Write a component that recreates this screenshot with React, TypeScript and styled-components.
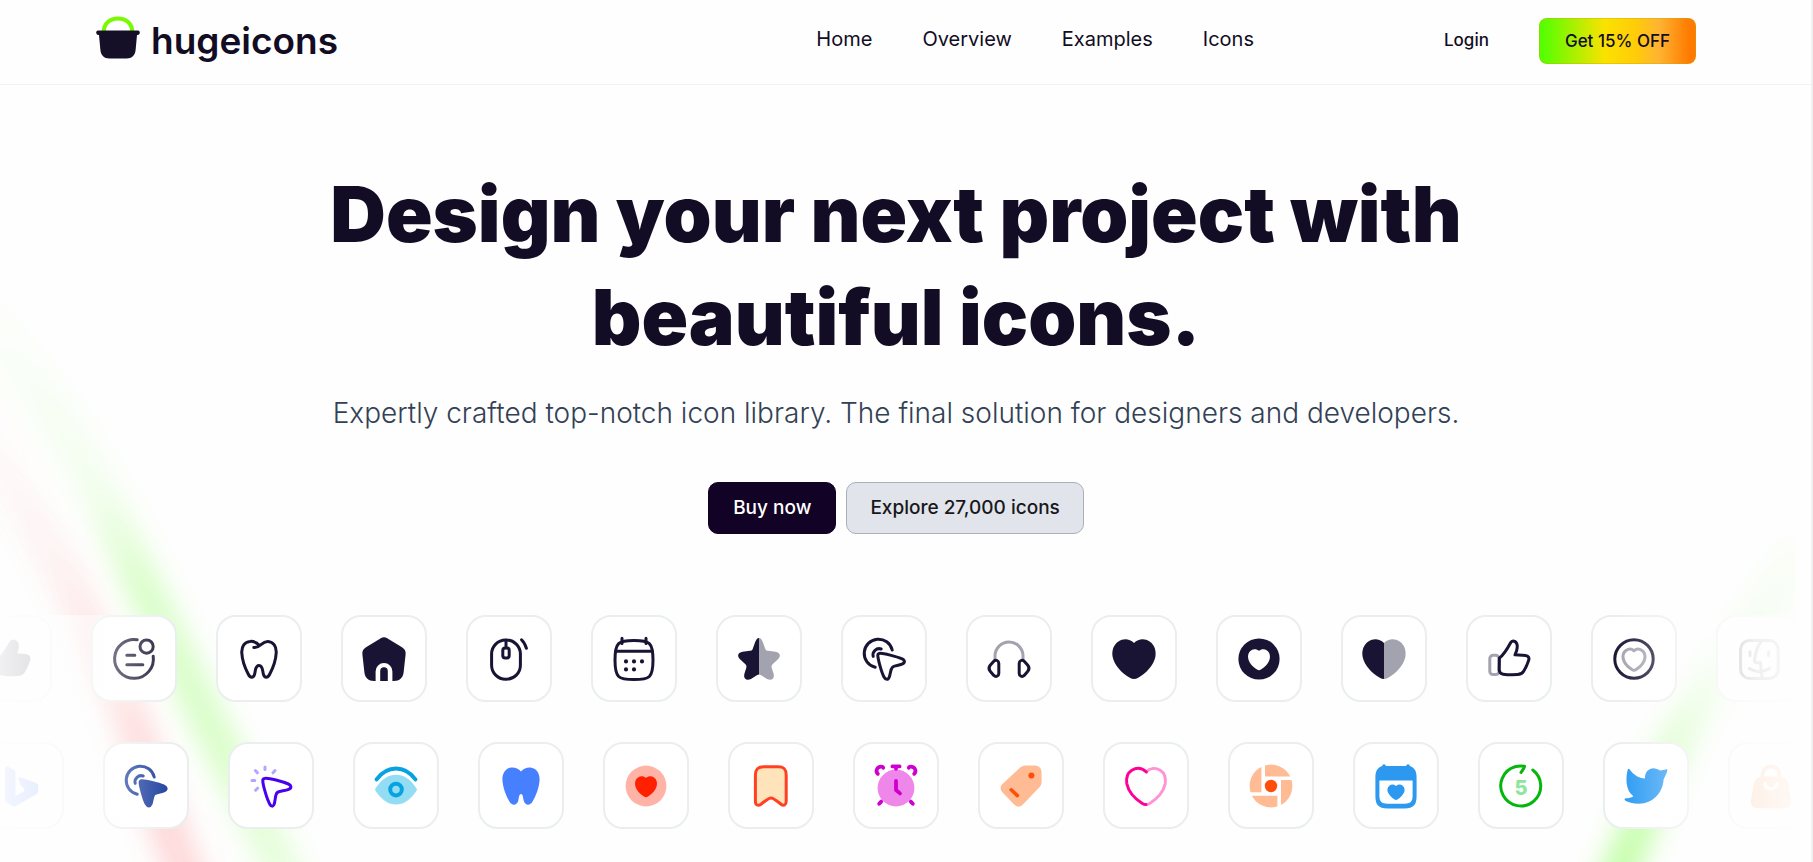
import React from "react";
import styled, { createGlobalStyle } from "styled-components";

const INK = "#191433";
const MUTED = "#a3a2af";

const GlobalStyle = createGlobalStyle`
  *, *::before, *::after { box-sizing: border-box; }
  body {
    margin: 0;
    background: #fefefe;
    font-family: Inter, "Liberation Sans", sans-serif;
    color: #120c24;
  }
  a { color: inherit; text-decoration: none; }
`;

const Page = styled.div`
  position: relative;
  isolation: isolate;
  min-height: 100vh;
  overflow: hidden;
  border-right: 2px solid #f0f0f0;
`;

const Backdrop = styled.svg<{ $side: "left" | "right" }>`
  position: absolute;
  top: 260px;
  ${(p) => (p.$side === "left" ? "left: 0;" : "right: 16px;")}
  z-index: -1;
  width: 400px;
  height: 602px;
`;

const Header = styled.header`
  display: flex;
  align-items: center;
  padding: 18px 115px 20px 96px;
  border-bottom: 1px solid #f3f3f3;
`;

const Brand = styled.a`
  display: flex;
  align-items: center;
  gap: 11px;
  height: 46px;
  font-size: 37px;
  line-height: 46px;
  font-weight: 600;
`;

const BrandMark = styled.svg`
  width: 44px;
  height: 44px;
  margin-bottom: 8px;
`;

const Nav = styled.nav`
  display: flex;
  gap: 50px;
  margin-left: auto;
  padding-bottom: 4px;
  font-size: 20px;
  line-height: 24px;
`;

const Actions = styled.div`
  display: flex;
  align-items: center;
  gap: 50px;
  margin-left: 190px;
  font-size: 17px;
  font-weight: 500;
`;

const LoginLink = styled.a`
  padding-bottom: 2px;
`;

const OfferButton = styled.button`
  height: 46px;
  padding: 0 25px;
  border: 1px solid rgba(200, 170, 0, 0.4);
  border-radius: 8px;
  background: linear-gradient(90deg, #55ff00 2%, #fbe200 42%, #ffcb0a 62%, #ffb432 76%, #ff7a00 96%) border-box;
  color: #120c24;
  font: inherit;
`;

const Content = styled.main`
  padding-right: 19px;
`;

const Hero = styled.section`
  display: flex;
  flex-direction: column;
  align-items: center;
  padding-top: 78px;
  text-align: center;
`;

const Title = styled.h1`
  max-width: 1200px;
  margin: 0;
  font-size: 77px;
  line-height: 103px;
  font-weight: 900;
`;

const Lead = styled.p`
  margin: 24px 0 0;
  color: #334155;
  font-size: 28px;
  line-height: 40px;
  font-weight: 350;
`;

const ButtonRow = styled.div`
  display: flex;
  gap: 10px;
  margin-top: 49px;
`;

const CallButton = styled.button<{ $primary?: boolean }>`
  height: 52px;
  padding: 0 ${(p) => (p.$primary ? 24 : 23)}px;
  border: 1px solid ${(p) => (p.$primary ? "#120226" : "#a9b0bc")};
  border-radius: 10px;
  background: ${(p) => (p.$primary ? "#120226" : "#e1e4eb")};
  color: ${(p) => (p.$primary ? "#ffffff" : "#18181b")};
  font: inherit;
  font-size: 19px;
  line-height: 24px;
  font-weight: 500;
`;

const Showcase = styled.section`
  position: relative;
  display: flex;
  flex-direction: column;
  gap: 40px;
  margin-top: 81px;
  padding-bottom: 32px;
  overflow: hidden;
`;

const Strip = styled.div<{ $shift: number }>`
  display: flex;
  gap: 39px;
  margin-left: ${(p) => -p.$shift}px;
`;

const Tile = styled.div`
  display: grid;
  place-items: center;
  flex: none;
  width: 86px;
  height: 87px;
  border: 2px solid #ebeeef;
  border-radius: 20px;
  background: #ffffff;
`;

const Glyph = styled.svg`
  display: block;
  width: 48px;
  height: 48px;
  fill: none;
  stroke-width: 1.5;
  stroke-linecap: round;
  stroke-linejoin: round;
`;

const Fade = styled.div<{ $side: "left" | "right" }>`
  position: absolute;
  top: 0;
  bottom: 32px;
  ${(p) => p.$side}: 0;
  width: 10%;
  pointer-events: none;
  background: linear-gradient(
    to ${(p) => p.$side},
    rgba(254, 254, 254, 0),
    rgba(254, 254, 254, 0.88) 80%,
    rgba(254, 254, 254, 0.94)
  );
`;

const HEART =
  "M12 4C9.7 1.7 6.6 1.7 4.2 3.2C1.7 4.8 .8 7.8 1.3 10.9C2.2 15.4 6.2 19.3 9.9 21.4C11.4 22.2 12.6 22.2 14.1 21.4C17.8 19.3 21.8 15.4 22.7 10.9C23.2 7.8 22.3 4.8 19.8 3.2C17.4 1.7 14.3 1.7 12 4Z";
const HEART_LEFT =
  "M12 4C9.7 1.7 6.6 1.7 4.2 3.2C1.7 4.8 .8 7.8 1.3 10.9C2.2 15.4 6.2 19.3 9.9 21.4C10.6 21.8 11.3 22 12 22Z";
const HEART_RIGHT =
  "M12 4C14.3 1.7 17.4 1.7 19.8 3.2C22.3 4.8 23.2 7.8 22.7 10.9C21.8 15.4 17.8 19.3 14.1 21.4C13.4 21.8 12.7 22 12 22Z";
const SMALL_HEART =
  "M12 7.9C10.8 6.8 9.2 6.9 8 7.7C6.7 8.6 6.3 10.2 6.6 11.8C7.1 14.2 9.1 16.1 11 17.3C11.7 17.8 12.3 17.8 13 17.3C14.9 16.1 16.9 14.2 17.4 11.8C17.7 10.2 17.3 8.6 16 7.7C14.8 6.9 13.2 6.8 12 7.9Z";
const STAR_LEFT =
  "M12 1.5C11.1 1.5 10.5 2.5 10 3.8L8.8 7.1C8.5 7.7 8 7.8 7.4 7.9L3.8 8.4C1.5 8.8 .9 10.4 2.4 12L5.2 14.6C5.7 15.2 5.8 15.6 5.7 16.2L4.7 19.4C4.1 21.9 5.8 23.1 8 22L11.1 20C11.4 19.8 11.7 19.7 12 19.7Z";
const CURSOR =
  "M9.6 9.2C11.4 8.9 18.7 10.9 20.8 11.8C22.6 12.6 22.7 13.8 21 14.6C19.3 15.4 17.1 15.2 16.2 16.1C15.2 17.1 15.3 19.4 14.6 21.1C14.1 22.5 12.8 22.5 12 21C10.8 18.8 8.9 12 8.9 10C8.9 9.6 9.1 9.3 9.6 9.2Z";
const THUMB =
  "M7.2 11.5C9.5 9.9 11.3 6.7 12.8 3.9C13.6 2.4 15.6 3 16 4.7C16.4 6.4 15.7 8.5 15 9.9C16.8 10 18.6 10 20.2 10.2C21.7 10.4 22.3 11.4 21.8 12.8C21.2 14.6 20.4 16.4 19.4 18C18.7 19.2 17.6 19.8 16.2 19.8C13.8 19.9 11.3 19.9 9.1 19.6C7.8 19.4 7.2 18.6 7.1 17.4Z";

const BLUE_INK = "#16399b";

const darkIcons: Array<[string, React.ReactNode]> = [
  ["Thumbs up, solid", <path d={THUMB} fill={INK} stroke={INK} />],
  [
    "Note",
    <g stroke={INK}>
      <path d="M13.6 2.4A9.7 9.7 0 1 0 21.6 10.6" />
      <circle cx="18.3" cy="5.8" r="3.3" />
      <path d="M8.4 10.1h4M8.4 14.9h8" />
    </g>,
  ],
  [
    "Tooth",
    <path
      stroke={INK}
      d="M12.3 5.3C11 3.9 9.4 3 7.5 3.2C4.8 3.4 3.2 5.8 3.4 8.9C3.6 12.8 5.2 16.8 6.6 19.5C7.6 21.6 9.2 21.6 9.8 19.6C10.3 18 10 15.2 12 15.2C14 15.2 13.7 18 14.2 19.6C14.8 21.6 16.4 21.6 17.4 19.5C18.8 16.8 20.4 12.8 20.6 8.9C20.8 5.8 19.2 3.4 16.5 3.2C13.2 3 12.6 6.7 9.4 6.2"
    />,
  ],
  [
    "Home",
    <g fill={INK}>
      <path d="M10.4 1.6C11.4 1 12.6 1 13.6 1.6L21 6.1C22.4 7 23 8.1 22.8 9.7L21.8 18.8C21.4 21.6 19.8 23 17 23H16.2V18.2A4.2 4.2 0 0 0 7.8 18.2V23H7C4.2 23 2.6 21.6 2.2 18.8L1.2 9.7C1 8.1 1.6 7 3 6.1Z" />
      <path d="M10.1 23V18A1.9 1.9 0 0 1 13.9 18V23Z" />
    </g>,
  ],
  [
    "Mouse",
    <g stroke={INK}>
      <rect x="3.3" y="2.5" width="14.4" height="19.6" rx="7" />
      <rect x="8.9" y="6.5" width="3.2" height="5" rx="1.2" />
      <path d="M10.5 2.6v3.8M18.3 2.4Q19.8 3.7 20.7 6.6" />
    </g>,
  ],
  [
    "Calendar",
    <g stroke={INK}>
      <path d="M12 2.8C19.8 2.8 21.5 3.6 21.5 12.5S19.8 22.3 12 22.3S2.5 21.4 2.5 12.5S4.2 2.8 12 2.8Z" />
      <path d="M2.8 8.1h18.4M6 1.6v2.6M18 1.6v2.6" />
      <path strokeWidth="2.1" d="M8 13.2h0M12 13.2h0M16 13.2h0M8 17.2h0M12 17.2h0" />
    </g>,
  ],
  [
    "Star",
    <>
      <path d={STAR_LEFT} fill={INK} />
      <path d={STAR_LEFT} fill={MUTED} transform="matrix(-1 0 0 1 24 0)" />
    </>,
  ],
  [
    "Click pointer",
    <g stroke={INK}>
      <path d="M16.1 7.5A7.1 7.1 0 1 0 7.6 16.1" />
      <path d="M10.6 7A3.1 3.1 0 0 0 6.6 10.7" />
      <path d={CURSOR} />
    </g>,
  ],
  [
    "Headphones",
    <>
      <path stroke={MUTED} d="M5 12.2V10.5A7 7 0 0 1 19 10.5V12.2" />
      <g stroke={INK}>
        <path d="M6.9 14.2V19.2C6.9 20.6 5.4 21.2 4.4 20.2L2.6 18.1C1.8 17.2 1.8 16.1 2.6 15.1L4.4 13.1C5.4 12.1 6.9 12.8 6.9 14.2Z" />
        <path d="M17.1 14.2V19.2C17.1 20.6 18.6 21.2 19.6 20.2L21.4 18.1C22.2 17.2 22.2 16.1 21.4 15.1L19.6 13.1C18.6 12.1 17.1 12.8 17.1 14.2Z" />
      </g>
    </>,
  ],
  ["Heart", <path d={HEART} fill={INK} />],
  [
    "Heart badge",
    <>
      <circle cx="12" cy="12" r="10.3" fill={INK} />
      <path d={SMALL_HEART} fill="#fff" />
    </>,
  ],
  [
    "Duotone heart",
    <>
      <path d={HEART_LEFT} fill={INK} />
      <path d={HEART_RIGHT} fill={MUTED} />
    </>,
  ],
  [
    "Thumbs up",
    <>
      <rect x="2.4" y="10.1" width="4.6" height="9.7" rx="1.7" stroke={MUTED} />
      <path d={THUMB} stroke={INK} />
    </>,
  ],
  [
    "Heart circle",
    <>
      <circle cx="12" cy="12" r="9.6" stroke={INK} />
      <path d={SMALL_HEART} stroke={MUTED} />
    </>,
  ],
  [
    "Finder",
    <g stroke="#8b8a99">
      <rect x="2.8" y="2.7" width="18.8" height="19" rx="4.5" />
      <path d="M13.2 3.2C11 5.8 10.1 9.6 9.8 12.6C9.7 13.5 10 13.9 10.8 13.9H12.8C12.8 16.8 13 19 13.7 21.5" />
      <path d="M7.5 8.4v1.9M16.8 8.4v1.9M7.2 16.8Q12 19.9 17.2 16.8" />
    </g>,
  ],
];

const colourIcons: Array<[string, React.ReactNode]> = [
  [
    "Bing",
    <path fill="#5b86ff" d="M4 3C4 2.2 4.8 2 5.5 2.4L8.3 3.9C9 4.3 9.2 4.7 9.2 5.5V17L13.6 14.6L13.7 13.2L12 12L10.8 8.8C10.6 7.9 11.2 7.5 12 7.8L19 10.2C20.1 10.6 20.6 11.2 20.6 12.3V14.2C20.6 15.1 20.2 15.7 19.4 16.2L9.4 22C8.6 22.4 7.9 22.3 7.2 21.8L4.7 20C4.2 19.6 4 19.2 4 18.6Z" />,
  ],
  [
    "Solid click pointer",
    <g stroke={BLUE_INK}>
      <path d="M16.1 7.5A7.1 7.1 0 1 0 7.6 16.1" />
      <path d="M10.6 7A3.1 3.1 0 0 0 6.6 10.7" />
      <path d={CURSOR} fill={BLUE_INK} strokeWidth="1.2" />
    </g>,
  ],
  [
    "Cursor with rays",
    <>
      <path
        stroke="#4a00ee"
        d="M8.8 8.2C10.5 7.7 18.3 10 20.7 11C22.3 11.7 22.4 13 20.8 13.7C18.9 14.6 16.2 14.2 15.1 15.3C13.9 16.5 14.3 19.3 13.5 21.3C12.9 22.4 12.1 22.3 11.4 21.1C9.8 18.3 7.9 11.2 7.9 9.2C7.9 8.6 8.2 8.3 8.8 8.2Z"
      />
      <path stroke="#b3a6ff" d="M9 2.5v1.3M4.2 4.3l1 1.1M14 4.3l-1 1.1M2.5 9.3h1.4M4.3 14.1l1-1" />
    </>,
  ],
  [
    "Eye",
    <>
      <path fill="#92dcf4" d="M1.8 13.1C5 8.4 8.2 6.4 12 6.4S19 8.4 22.2 13.1C22.5 13.6 22.5 14 22.2 14.5C19 19.2 15.8 21.2 12 21.2S5 19.2 1.8 14.5C1.5 14 1.5 13.6 1.8 13.1Z" />
      <path stroke="#06a3e0" strokeWidth="2" d="M2.3 8.7Q6.4 3.3 12 3.3T21.7 8.7" />
      <circle cx="12" cy="13.8" r="2.9" stroke="#06a3e0" strokeWidth="2" />
    </>,
  ],
  [
    "Solid tooth",
    <path
      fill="#4680ff"
      d="M12 4.7C10.8 3.3 9.1 2.6 7.3 2.7C4.3 3 2.6 5.6 2.7 8.9C2.9 13 4.6 17 6.2 19.8C7.6 22.2 10.1 21.7 10.7 19.1C11 17.9 11 16 12 16S13 17.9 13.3 19.1C13.9 21.7 16.4 22.2 17.8 19.8C19.4 17 21.1 13 21.3 8.9C21.4 5.6 19.7 3 16.7 2.7C14.9 2.6 13.2 3.3 12 4.7Z"
    />,
  ],
  [
    "Red heart badge",
    <>
      <circle cx="12" cy="12" r="10.2" fill="#ffb3a7" />
      <path d={SMALL_HEART} fill="#ff2000" />
    </>,
  ],
  [
    "Bookmark",
    <path
      fill="#ffe3bb"
      stroke="#ff4023"
      d="M4.2 6.6C4.2 3.6 5.4 2.4 8.4 2.4H15.6C18.6 2.4 19.6 3.6 19.6 6.6V19.6C19.6 21.6 18.4 22.2 17 21.1C15.6 20 13.2 18 12 18S8.4 20 7 21.1C5.5 22.2 4.2 21.6 4.2 19.6Z"
    />,
  ],
  [
    "Alarm clock",
    <>
      <circle cx="12" cy="13" r="9.2" fill="#ef86ea" />
      <g stroke="#cf00cf" strokeWidth="1.9">
        <path d="M10.2 2.2h3.6M12 2.4v1" />
        <path d="M12 9.4V14L14 15.7M3.6 20.9l1-1.1M20.4 20.9l-1-1.1" />
        <path d="M2.9 5.9C1.6 4.6 2.5 2.5 4.3 2.3C5 2.2 5.5 2.5 5.6 2.9M21.1 5.9C22.4 4.6 21.5 2.5 19.7 2.3C19 2.2 18.5 2.5 18.4 2.9" />
      </g>
    </>,
  ],
  [
    "Tag",
    <>
      <path fill="#ffbb94" d="M11.3 3C12.2 2.2 13 1.9 14.4 1.8H18.2C21.2 1.8 22.3 3 22.3 5.8V9.6C22.3 11 21.9 11.9 21.1 12.8L13.2 21C11.6 22.7 9.9 22.7 8.3 21L2.9 15.4C1.4 13.8 1.4 12.4 3 10.8Z" />
      <circle cx="17.2" cy="6.7" r="1.5" fill="#ff4d0a" />
      <path stroke="#ff4d0a" strokeWidth="1.8" d="M7.1 13.9l3.1 2.9" />
    </>,
  ],
  [
    "Outline heart",
    <>
      <path stroke="#ff94d5" d="M12 4.9C14.1 2.9 16.9 2.8 19.1 4.1C21.3 5.5 22 8.2 21.6 10.9C20.7 15 17.5 18.4 14 20.6C13.2 21.1 12.6 21.3 12 21.3" />
      <path stroke="#ff0096" d="M12.2 5C9.9 2.9 7.1 2.8 4.9 4.1C2.7 5.5 2 8.2 2.4 10.9C3.3 15 6.5 18.4 10 20.6C10.8 21.1 11.4 21.3 12 21.3" />
    </>,
  ],
  [
    "Browser",
    <>
      <circle cx="12" cy="12" r="10.7" fill="#ffbb94" />
      <path fill="#fff" d="M7.2 0H9V7.2H24V9H17V24H15.2V16.9H0V15.1H7.2Z" />
      <circle cx="12" cy="12" r="3.1" fill="#ff4d0a" />
    </>,
  ],
  [
    "Calendar heart",
    <>
      <path
        fill="#2d98f0"
        d="M5.1 2A.9.9 0 0 1 6.9 2H17.1A.9.9 0 0 1 18.9 2C21.5 3 22.3 4.6 22.3 8V17C22.3 21.5 20.7 23.2 16.3 23.2H7.7C3.3 23.2 1.7 21.5 1.7 17V8C1.7 4.6 2.5 3 5.1 2Z"
      />
      <path fill="#fff" d="M3.7 9.2H20.3V16.8C20.3 19.9 19.2 20.9 16.2 20.9H7.8C4.8 20.9 3.7 19.9 3.7 16.8Z" />
      <path
        fill="#2d98f0"
        d="M12 12C10.9 11.1 9.7 11.1 8.8 11.7C7.8 12.4 7.5 13.6 7.8 14.8C8.3 16.4 9.8 17.9 11.3 18.8C11.8 19.1 12.2 19.1 12.7 18.8C14.2 17.9 15.7 16.4 16.2 14.8C16.5 13.6 16.2 12.4 15.2 11.7C14.3 11.1 13.1 11.1 12 12Z"
      />
    </>,
  ],
  [
    "Forward five seconds",
    <>
      <path stroke="#05b60c" d="M17.9 4A10 10 0 1 1 9 2.4C10.6 1.9 12 1.9 13.8 2.1C13.5 3.3 12.8 4.3 12 5.2" />
      <text x="12" y="16.6" textAnchor="middle" fontSize="10" fontWeight="800" fill="#8de79b">
        5
      </text>
    </>,
  ],
  [
    "Bird",
    <path
      fill="#2196f3"
      d="M22.7 4C22.4 5.9 21.4 7.2 20.8 8.8C20.4 15.4 15.5 20.9 8.5 20.9C5.5 20.9 3 20.3 1.6 19.3C1 18.7 1.3 18.1 2 18.1C3.3 18.1 4.6 17.8 5.7 17.1C1.8 14.5 1.7 8 2.9 3.8C3.1 3.2 3.5 3.2 3.9 3.7C5.8 6.4 8.4 8 11.5 8.2C11.4 5.2 13.4 3 16.2 3.2C17.3 3.3 18.3 3.6 19 4.2C20 4.2 21.3 3.9 22.2 3.6C22.6 3.5 22.8 3.6 22.7 4Z"
    />,
  ],
  [
    "Shopping bag",
    <>
      <path stroke="#ffa05a" strokeWidth="1.8" d="M7.8 8V6.4A4.2 4.2 0 0 1 16.2 6.4V8" />
      <path fill="#ffa05a" d="M8 7.3H16C18.4 7.3 20 8.4 20.6 10.8L22 19C22.3 21.8 21.1 23.1 18.4 23.1H5.6C2.9 23.1 1.7 21.8 2 19L3.4 10.8C4 8.4 5.6 7.3 8 7.3Z" />
      <path stroke="#fff" strokeWidth="1.8" d="M9 10.8C9.4 14.2 14.6 14.2 15 10.8" />
    </>,
  ],
];

function IconStrip({ icons, shift }: { icons: Array<[string, React.ReactNode]>; shift: number }) {
  return (
    <Strip $shift={shift}>
      {icons.map(([label, drawing]) => (
        <Tile key={label}>
          <Glyph viewBox="0 0 24 24" role="img" aria-label={label}>
            {drawing}
          </Glyph>
        </Tile>
      ))}
    </Strip>
  );
}

function LeftBeams() {
  return (
    <Backdrop $side="left" viewBox="0 0 400 602" aria-hidden="true">
      <defs>
        <linearGradient id="green-left" gradientUnits="userSpaceOnUse" x1="0" y1="60" x2="0" y2="620">
          <stop offset="0" stopColor="#8bff55" stopOpacity="0.02" />
          <stop offset="0.3" stopColor="#8bff55" stopOpacity="0.1" />
          <stop offset="0.48" stopColor="#8bff55" stopOpacity="0.31" />
          <stop offset="0.75" stopColor="#8bff55" stopOpacity="0.31" />
          <stop offset="1" stopColor="#8bff55" stopOpacity="0.18" />
        </linearGradient>
        <linearGradient id="pink-left" gradientUnits="userSpaceOnUse" x1="0" y1="120" x2="0" y2="620">
          <stop offset="0" stopColor="#ff7070" stopOpacity="0" />
          <stop offset="0.35" stopColor="#ff7070" stopOpacity="0.08" />
          <stop offset="0.5" stopColor="#ff7070" stopOpacity="0.15" />
          <stop offset="0.7" stopColor="#ff7070" stopOpacity="0.29" />
          <stop offset="1" stopColor="#ff7070" stopOpacity="0.25" />
        </linearGradient>
        <filter id="soft-left" filterUnits="userSpaceOnUse" x="-150" y="-50" width="650" height="800">
          <feGaussianBlur stdDeviation="12" />
        </filter>
      </defs>
      <g fill="none" strokeWidth="38" strokeLinejoin="round" filter="url(#soft-left)">
        <path stroke="url(#green-left)" d="M-30 40L10 94L50 147L100 232L147 334L200 445L267 578L305 660" />
        <path stroke="url(#pink-left)" d="M-30 130L7 216L68 318L127 452L167 565L202 660" />
      </g>
    </Backdrop>
  );
}

function RightBeam() {
  return (
    <Backdrop $side="right" viewBox="0 0 400 602" aria-hidden="true">
      <defs>
        <linearGradient id="green-right" gradientUnits="userSpaceOnUse" x1="0" y1="280" x2="0" y2="602">
          <stop offset="0" stopColor="#7dff40" stopOpacity="0.02" />
          <stop offset="0.3" stopColor="#7dff40" stopOpacity="0.08" />
          <stop offset="0.65" stopColor="#7dff40" stopOpacity="0.32" />
          <stop offset="1" stopColor="#7dff40" stopOpacity="0.42" />
        </linearGradient>
        <filter id="soft-right" filterUnits="userSpaceOnUse" x="-100" y="150" width="650" height="600">
          <feGaussianBlur stdDeviation="12" />
        </filter>
      </defs>
      <path
        fill="none"
        stroke="url(#green-right)"
        strokeWidth="38"
        filter="url(#soft-right)"
        d="M410 285C370 350 325 410 292 465C268 508 245 560 205 660"
      />
    </Backdrop>
  );
}

const links = ["Home", "Overview", "Examples", "Icons"];

export default function App() {
  return (
    <>
      <GlobalStyle />
      <Page>
        <LeftBeams />
        <RightBeam />
        <Header>
          <Brand href="#">
            <BrandMark viewBox="0 0 44 44" aria-hidden="true">
              <path d="M7.8 17C7.8 8.5 14 3.5 22 3.5S36.2 8.5 36.2 17" fill="none" stroke="#78fa00" strokeWidth="4" />
              <path
                fill="#160f28"
                d="M2 15.5H42C44.5 15.5 44.5 20 41.5 20H41L39.6 35C39 40.5 36 43.5 30.5 43.5H13.5C8 43.5 5 40.5 4.4 35L3 20H2.5C-.5 20-.5 15.5 2 15.5Z"
              />
            </BrandMark>
            hugeicons
          </Brand>
          <Nav>
            {links.map((name) => (
              <a key={name} href={`#${name.toLowerCase()}`}>
                {name}
              </a>
            ))}
          </Nav>
          <Actions>
            <LoginLink href="#login">Login</LoginLink>
            <OfferButton type="button">Get 15% OFF</OfferButton>
          </Actions>
        </Header>
        <Content>
          <Hero>
            <Title>Design your next project with beautiful icons.</Title>
            <Lead>Expertly crafted top-notch icon library. The final solution for designers and developers.</Lead>
            <ButtonRow>
              <CallButton type="button" $primary>
                Buy now
              </CallButton>
              <CallButton type="button">Explore 27,000 icons</CallButton>
            </ButtonRow>
          </Hero>
          <Showcase>
            <IconStrip icons={darkIcons} shift={34} />
            <IconStrip icons={colourIcons} shift={22} />
            <Fade $side="left" />
            <Fade $side="right" />
          </Showcase>
        </Content>
      </Page>
    </>
  );
}
